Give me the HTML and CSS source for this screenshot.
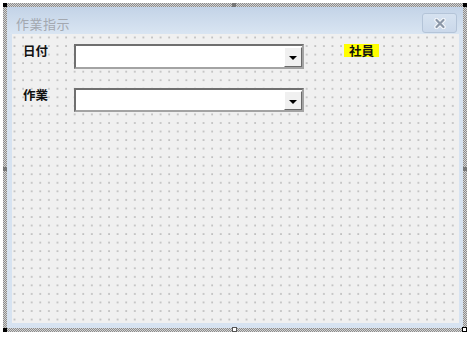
FILE: index.html
```html
<!DOCTYPE html>
<html lang="ja">
<head>
    <meta charset="UTF-8">
    <title>作業指示</title>
    <link rel="stylesheet" href="styles.css">
</head>
<body>
    <div class="designer">
        <span class="handle handle-tl"></span>
        <span class="handle handle-tc"></span>
        <span class="handle handle-tr"></span>
        <span class="handle handle-ml"></span>
        <span class="handle handle-mr"></span>
        <span class="handle handle-bl"></span>
        <span class="handle handle-bc"></span>
        <span class="handle handle-br"></span>

        <div class="form">
            <div class="titlebar">
                <span class="title">作業指示</span>
                <button class="close-btn">
                    <svg width="14" height="11" viewBox="0 0 14 11">
                        <path d="M3.5 2 L10.5 9 M10.5 2 L3.5 9" stroke="#f4f7fb" stroke-width="4.5" stroke-linecap="round"/>
                        <path d="M3.5 2 L10.5 9 M10.5 2 L3.5 9" stroke="#8b97a8" stroke-width="2.2" stroke-linecap="round"/>
                    </svg>
                </button>
            </div>
            <div class="client">
                <div class="row">
                    <label class="caption">日付</label>
                    <div class="combo">
                        <div class="combo-text"></div>
                        <div class="combo-btn"><span class="arrow"></span></div>
                    </div>
                    <label class="caption highlight">社員</label>
                </div>
                <div class="row">
                    <label class="caption">作業</label>
                    <div class="combo short">
                        <div class="combo-text"></div>
                        <div class="combo-btn"><span class="arrow"></span></div>
                    </div>
                </div>
            </div>
        </div>
    </div>
</body>
</html>
```

FILE: styles.css
```css
body {
    margin: 0;
    background-color: #ffffff;
    font-family: 'Noto Sans CJK JP', 'DejaVu Sans', sans-serif;
}

/* selection frame of the designer */
.designer {
    position: relative;
    margin: 3px;
    width: 456px;
    height: 321px;
    padding: 4px;
    background-color: #b8b8b8;
    background-image: repeating-conic-gradient(#8c8c8c 0 25%, #d4d4d4 0 50%);
    background-size: 2px 2px;
}

.handle {
    position: absolute;
    width: 4px;
    height: 4px;
    background-color: #000;
}

.handle-tl { left: 0; top: 0; }
.handle-tr { right: 0; top: 0; }
.handle-bl { left: 0; bottom: 0; }
.handle-tc { left: 229px; top: 0; background-color: #777; }
.handle-ml { left: 0; top: 164px; background-color: #777; }
.handle-mr { right: 0; top: 164px; background-color: #777; }
.handle-bc { left: 229px; bottom: 0; background-color: #fff; border: 1px solid #555; width: 3px; height: 3px; }
.handle-br { right: 0; bottom: 0; background-color: #fff; border: 1px solid #000; width: 3px; height: 3px; }

.form {
    display: flex;
    flex-direction: column;
    width: 456px;
    height: 321px;
    background-color: #d7e3f1;
}

.titlebar {
    display: flex;
    align-items: flex-end;
    justify-content: space-between;
    box-sizing: border-box;
    height: 27px;
    padding: 0 6px 0 9px;
    background: linear-gradient(to bottom, #c3d3e7, #d9e5f2);
}

.title {
    margin-bottom: 3px;
    font-size: 13px;
    line-height: 14px;
    color: #a3a8b0;
    letter-spacing: 0.5px;
}

.close-btn {
    display: flex;
    align-items: center;
    justify-content: center;
    box-sizing: border-box;
    width: 35px;
    height: 20px;
    margin-bottom: 1px;
    padding: 0;
    border: 1px solid #b4c4d8;
    border-radius: 3px;
    background: linear-gradient(to bottom, #d6e2f0, #cad8ea);
}

.client {
    flex: 1;
    margin: 0 4px 5px 5px;
    padding: 10px 0 0 11px;
    background-color: #f0f0f0;
    background-image: radial-gradient(circle at 1px 1px, #b4b4b4 0.5px, rgba(200, 200, 200, 0.5) 0.9px, transparent 1.2px);
    background-size: 8.6px 8.55px;
    background-position: 1.5px 2.5px;
}

.row {
    display: flex;
    align-items: flex-start;
    margin-bottom: 19px;
}

.caption {
    width: 51px;
    font-size: 12.5px;
    font-weight: bold;
    line-height: 13px;
    color: #111;
}

.highlight {
    width: auto;
    margin: 0 0 0 40px;
    padding: 0 5px;
    background-color: #ffff00;
}

.combo {
    display: flex;
    box-sizing: border-box;
    width: 230px;
    height: 25px;
    border-top: 2px solid #6f6f6f;
    border-left: 2px solid #6f6f6f;
    border-right: 2px solid #a3a3a3;
    border-bottom: 2px solid #a3a3a3;
    background-color: #fff;
}

.combo.short {
    height: 24px;
}

.combo-text {
    flex: 1;
}

.combo-btn {
    display: flex;
    align-items: center;
    justify-content: center;
    box-sizing: border-box;
    width: 18px;
    margin-top: 1px;
    border-top: 1px solid #ffffff;
    border-left: 1px solid #ffffff;
    border-right: 1px solid #6a6a6a;
    border-bottom: 1px solid #6a6a6a;
    background-color: #f0f0f0;
}

.arrow {
    width: 0;
    height: 0;
    margin-top: 2px;
    border-left: 4.5px solid transparent;
    border-right: 4.5px solid transparent;
    border-top: 4.5px solid #000;
}
```
